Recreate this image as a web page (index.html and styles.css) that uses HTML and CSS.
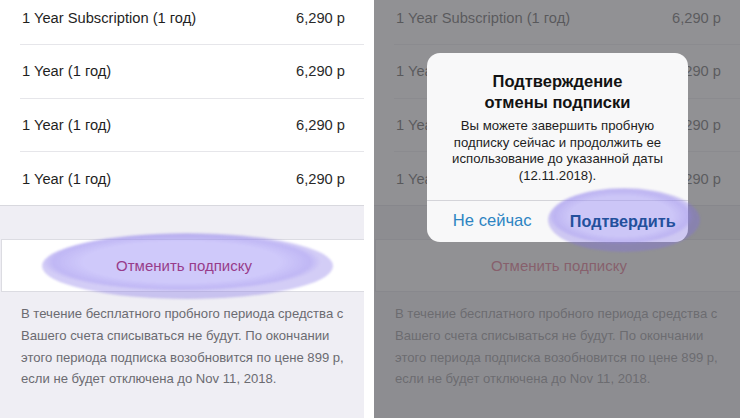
FILE: index.html
```html
<!DOCTYPE html>
<html lang="ru">
<head>
<meta charset="utf-8">
<title>Отмена подписки</title>
<link rel="stylesheet" href="styles.css">
</head>
<body>
<div class="stage">
  <section class="panel panel--left">
    <div class="list">
      <div class="row"><span>1 Year Subscription (1 год)</span><span class="price">6,290 р</span></div>
      <div class="row"><span>1 Year (1 год)</span><span class="price">6,290 р</span></div>
      <div class="row"><span>1 Year (1 год)</span><span class="price">6,290 р</span></div>
      <div class="row"><span>1 Year (1 год)</span><span class="price">6,290 р</span></div>
    </div>
    <div class="band"></div>
    <div class="action">
      <span class="highlight highlight--cancel"></span>
      <span class="action-text">Отменить подписку</span>
    </div>
    <p class="footer">В течение бесплатного пробного периода средства с<br>Вашего счета списываться не будут. По окончании<br>этого периода подписка возобновится по цене 899 р,<br>если не будет отключена до Nov 11, 2018.</p>
  </section>

  <section class="panel panel--right">
    <div class="list list--dimmed">
      <div class="row"><span>1 Year Subscription (1 год)</span><span class="price">6,290 р</span></div>
      <div class="row"><span>1 Year</span><span class="price">6,290 р</span></div>
      <div class="row"><span>1 Year</span><span class="price">6,290 р</span></div>
      <div class="row"><span>1 Year</span><span class="price">6,290 р</span></div>
    </div>
    <div class="band"></div>
    <div class="action">
      <span class="action-text">Отменить подписку</span>
    </div>
    <p class="footer">В течение бесплатного пробного периода средства с<br>Вашего счета списываться не будут. По окончании<br>этого периода подписка возобновится по цене 899 р,<br>если не будет отключена до Nov 11, 2018.</p>

    <div class="dim"></div>

    <div class="dialog">
      <div class="dialog-body">
        <div class="dialog-title">Подтверждение<br>отмены подписки</div>
        <div class="dialog-msg">Вы можете завершить пробную<br>подписку сейчас и продолжить ее<br>использование до указанной даты<br>(12.11.2018).</div>
      </div>
      <div class="dialog-actions">
        <span class="dialog-btn"><span class="dialog-label">Не сейчас</span></span>
        <span class="dialog-btn dialog-btn--confirm"><span class="dialog-label">Подтвердить</span></span>
      </div>
      <span class="highlight highlight--confirm"></span>
    </div>
  </section>
</div>
</body>
</html>
```

FILE: styles.css
```css
* { box-sizing: border-box; }

html, body {
  margin: 0;
  padding: 0;
  background: #ffffff;
}

body {
  width: 740px;
  height: 418px;
  overflow: hidden;
  font-family: "Liberation Sans", Arial, sans-serif;
}

.stage {
  display: flex;
  gap: 10px;
  height: 418px;
  background: #ffffff;
}

.panel {
  position: relative;
  height: 418px;
  overflow: hidden;
  background: #efeef4;
  display: flex;
  flex-direction: column;
}

.panel--left { width: 364px; }
.panel--right { width: 366px; }

.list {
  background: #ffffff;
  margin-top: -8px;
  border-bottom: 1px solid #d8d8de;
}

.row {
  height: 53.3px;
  margin-left: 20px;
  padding: 0 19px 0 2px;
  display: flex;
  align-items: center;
  justify-content: space-between;
  font-size: 14.7px;
  color: #1f1f1f;
  border-bottom: 1px solid #e6e6ea;
}

.row:last-child { border-bottom: none; }

.price { color: #2a2a2a; }

.band {
  height: 33px;
  background: #efeef4;
}

.action {
  position: relative;
  height: 53px;
  margin-left: 1px;
  background: #ffffff;
  border-top: 1px solid #dcdce2;
  border-bottom: 1px solid #dcdce2;
  border-left: 1px solid #dcdce2;
  display: flex;
  align-items: center;
  justify-content: center;
}

.action-text {
  position: relative;
  font-size: 15px;
  color: #983c8a;
  padding-left: 2px;
}

.panel--right .action-text { color: #d63c62; }

.footer {
  margin: 0;
  padding: 11px 10px 0 21px;
  font-size: 13.1px;
  line-height: 21.7px;
  color: #6b6b71;
  white-space: nowrap;
}

.highlight {
  position: absolute;
  border-radius: 50%;
  background: radial-gradient(ellipse closest-side at 48% 44%, rgba(160, 148, 246, 0.5) 70%, rgba(140, 124, 236, 0.55) 92%, rgba(130, 112, 230, 0.35) 100%);
  filter: blur(1.3px);
}

.highlight--cancel {
  left: 40px;
  top: -7px;
  width: 291px;
  height: 66px;
}

.dim {
  position: absolute;
  inset: 0;
  background: rgba(108, 108, 112, 0.75);
}

.dialog {
  position: absolute;
  left: 53px;
  top: 53px;
  width: 261px;
  background: #f8f8f9;
  border-radius: 13px;
}

.dialog-body {
  padding: 18px 10px 15px;
  text-align: center;
}

.dialog-title {
  font-size: 16.5px;
  line-height: 21px;
  font-weight: 700;
  color: #121212;
}

.dialog-msg {
  margin-top: 5px;
  font-size: 13.2px;
  line-height: 16.7px;
  color: #1e1e1e;
}

.dialog-actions {
  display: grid;
  grid-template-columns: 1fr 1fr;
  height: 42px;
  border-top: 1px solid #d4d4d9;
}

.dialog-btn {
  display: flex;
  align-items: center;
  justify-content: center;
  font-size: 16.6px;
  color: #2d84c2;
}

.dialog-label {
  position: relative;
  z-index: 2;
}

.dialog-btn--confirm {
  font-weight: 700;
  font-size: 16.2px;
  color: #23509c;
}

.highlight--confirm {
  z-index: 1;
  left: 121px;
  top: 135px;
  width: 152px;
  height: 64px;
}
```
